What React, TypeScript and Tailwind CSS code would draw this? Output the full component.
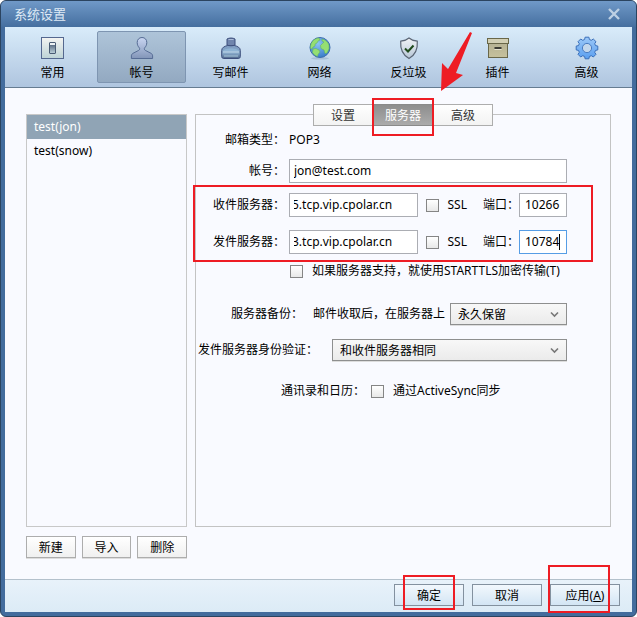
import { useState, type ReactNode } from "react";

const GeneralIcon = () => (
  <svg width="24" height="24" viewBox="0 0 24 24" aria-hidden="true">
    <defs>
      <linearGradient id="general" x1="0" y1="0" x2="0" y2="1">
        <stop offset="0" stopColor="#f4f4f2" />
        <stop offset="1" stopColor="#bdd3d6" />
      </linearGradient>
      <linearGradient id="switch" x1="0" y1="0" x2="0" y2="1">
        <stop offset="0" stopColor="#5d7086" />
        <stop offset="1" stopColor="#b9cdd6" />
      </linearGradient>
    </defs>
    <rect x="0.5" y="1.5" width="22" height="21" fill="url(#general)" stroke="#55688f" />
    <rect x="8.5" y="6.5" width="6" height="11" rx="0.5" fill="#eef3f5" stroke="#4a5c74" />
    <rect x="9" y="9" width="5" height="8" fill="url(#switch)" />
  </svg>
);

const AccountIcon = () => (
  <svg width="24" height="24" viewBox="0 0 24 24" aria-hidden="true">
    <defs>
      <linearGradient id="person" x1="0" y1="0" x2="0" y2="1">
        <stop offset="0" stopColor="#c9d6f2" />
        <stop offset="1" stopColor="#8295b8" />
      </linearGradient>
    </defs>
    <path
      d="M12 1.5c-3 0-4.8 2.2-4.8 5 0 2.4.9 4 2.1 5.3 .6 .7 .5 2-.6 2.6L3 17.3c-1.100.6-1.600 1.500-1.600 2.700v2.500h21.200V20c0-1.200-.5-2.100-1.600-2.700l-5.700-2.900c-1.100-.6-1.200-1.900-.6-2.600C15.900 10.500 16.800 8.900 16.800 6.500c0-2.800-1.800-5-4.800-5z"
      fill="url(#person)"
      stroke="#566c94"
    />
  </svg>
);

const ComposeIcon = () => (
  <svg width="24" height="24" viewBox="0 0 24 24" aria-hidden="true">
    <defs>
      <linearGradient id="ink" x1="0" y1="0" x2="0" y2="1">
        <stop offset="0" stopColor="#7f9cc2" />
        <stop offset="0.6" stopColor="#86a8c8" />
        <stop offset="1" stopColor="#4c6388" />
      </linearGradient>
    </defs>
    <path
      d="M8.500 9.500c-3 .8-5.800 2-5.800 5v6c0 1.200.8 2 2 2h14.600c1.200 0 2-.8 2-2v-6c0-3-2.800-4.200-5.800-5z"
      fill="url(#ink)"
      stroke="#3d4f7c"
    />
    <path d="M4 15.500c.5-2 3-3 8-3s7.500 1 8 3z" fill="#8fb4d4" />
    <path d="M4 16h16" stroke="#c4dcec" />
    <path d="M5 20h14" stroke="#a9c8da" />
    <path d="M8 3c2-1.300 6-1.300 8 0v6c-2 1-6 1-8 0z" fill="#7085ad" stroke="#3d4f7c" />
    <path d="M9.500 3.500h5" stroke="#aabbd8" />
  </svg>
);

const NetworkIcon = () => (
  <svg width="24" height="24" viewBox="0 0 24 24" aria-hidden="true">
    <defs>
      <radialGradient id="globe" cx="0.4" cy="0.3" r="0.8">
        <stop offset="0" stopColor="#8cc4f4" />
        <stop offset="1" stopColor="#2f74c4" />
      </radialGradient>
    </defs>
    <ellipse cx="12" cy="22.300" rx="9" ry="1.200" fill="#8ba6c4" opacity="0.5" />
    <circle cx="12" cy="11.500" r="10" fill="url(#globe)" stroke="#3d6dae" />
    <path d="M4 6c2-3 5-4 7-4l1 2-2 1-1 2-2 1 0 2-2 1-1 2-1.500-.5c-.3-2 .2-4.500 1.500-6.500z" fill="#95df72" stroke="#5cae5a" strokeWidth="0.5" />
    <path d="M5 13l3-.5 3 1.500 1 2-2 2.500-.5 2c-2-.8-4-2-5-4z" fill="#95df72" stroke="#5cae5a" strokeWidth="0.5" />
    <path d="M14 3c3 .5 6 3 7 6v4l-2 4-2 .5-1-3.500-3-1.500-.5-3 2-2 1.500-1.500-2-1z" fill="#95df72" stroke="#5cae5a" strokeWidth="0.5" />
  </svg>
);

const SpamIcon = () => (
  <svg width="24" height="24" viewBox="0 0 24 24" aria-hidden="true">
    <defs>
      <linearGradient id="shield" x1="0" y1="0" x2="0" y2="1">
        <stop offset="0" stopColor="#f2f4f6" />
        <stop offset="1" stopColor="#b6c6d6" />
      </linearGradient>
    </defs>
    <path
      d="M12 2c2 1.800 4.800 2.800 8.300 3.200 .5 6.800-1.300 13.300-8.300 17.300C5 18.500 3.200 12 3.700 5.200 7.200 4.800 10 3.800 12 2z"
      fill="url(#shield)"
      stroke="#5b6675"
      strokeWidth="1.200"
    />
    <path d="M8 12.500l3 3 5.500-6" fill="none" stroke="#1f4a1c" strokeWidth="2" />
  </svg>
);

const PluginIcon = () => (
  <svg width="24" height="24" viewBox="0 0 24 24" aria-hidden="true">
    <defs>
      <linearGradient id="box" x1="0" y1="0" x2="0" y2="1">
        <stop offset="0" stopColor="#b5b193" />
        <stop offset="1" stopColor="#c6c19c" />
      </linearGradient>
    </defs>
    <rect x="2.500" y="6.500" width="19" height="15" fill="url(#box)" stroke="#696749" />
    <rect x="1.500" y="2.500" width="21" height="5" fill="#d2cfb4" stroke="#696749" />
    <path d="M8.500 12h7" stroke="#3b3b34" strokeWidth="2" />
    <path d="M8.500 13.500h7" stroke="#e6e3cf" />
  </svg>
);

const AdvancedIcon = () => (
  <svg width="24" height="24" viewBox="0 0 24 24" aria-hidden="true">
    <defs>
      <linearGradient id="gear" x1="0" y1="0" x2="0" y2="1">
        <stop offset="0" stopColor="#9cc8f8" />
        <stop offset="1" stopColor="#5a9ff0" />
      </linearGradient>
    </defs>
    <path
      d="M9.600 3.500L10.100 1.200H13.900L14.400 3.500L16.300 4.300L18.300 3L21 5.700L19.700 7.700L20.500 9.600L22.800 10.100V13.900L20.500 14.400L19.700 16.300L21 18.300L18.300 21L16.300 19.700L14.400 20.500L13.900 22.800H10.100L9.600 20.500L7.700 19.700L5.700 21L3 18.300L4.300 16.300L3.500 14.400L1.200 13.900V10.100L3.500 9.600L4.300 7.700L3 5.700L5.700 3L7.700 4.300Z"
      fill="url(#gear)"
      stroke="#3a6fb8"
      strokeLinejoin="round"
    />
    <circle cx="12" cy="12" r="4.600" fill="#c3d7ec" stroke="#4a7cc0" />
  </svg>
);

const categories = [
  { label: "常用", icon: <GeneralIcon /> },
  { label: "帐号", icon: <AccountIcon /> },
  { label: "写邮件", icon: <ComposeIcon /> },
  { label: "网络", icon: <NetworkIcon /> },
  { label: "反垃圾", icon: <SpamIcon /> },
  { label: "插件", icon: <PluginIcon /> },
  { label: "高级", icon: <AdvancedIcon /> },
];

const accounts = ["test(jon)", "test(snow)"];
const tabs = ["设置", "服务器", "高级"];

const fieldClass = "h-6 border border-[#abadb3] bg-white px-1 pb-0.5 outline-none";

const Checkbox = ({ id }: { id: string }) => (
  <input
    id={id}
    type="checkbox"
    className="size-[13px] shrink-0 appearance-none border border-[#858585] bg-linear-to-b from-white to-[#e8e8e8] checked:bg-[#436c9d]"
  />
);

type DropdownProps = { id: string; value: string; className: string };

const Dropdown = ({ id, value, className }: DropdownProps) => (
  <div className={`relative ${className}`}>
    <select
      id={id}
      className="h-[22px] w-full appearance-none border border-[#8e8f8f] bg-linear-to-b from-[#f8f8f8] to-[#ebebeb] pt-0.5 pl-[7px] pr-6 shadow-[0_1px_0_#dddddd]"
    >
      <option>{value}</option>
    </select>
    <svg className="pointer-events-none absolute right-2 top-2" width="9" height="7" viewBox="0 0 9 7" aria-hidden="true">
      <path d="M1 1.500l3.500 3.500L8 1.500" fill="none" stroke="#777" strokeWidth="1.600" />
    </svg>
  </div>
);

type ServerRowProps = { id: string; label: string; host: string; port: string; active?: boolean };

const ServerRow = ({ id, label, host, port, active }: ServerRowProps) => (
  <div className="flex items-center">
    <label htmlFor={id} className="w-[93px] shrink-0 pr-1 text-right">
      {label}
    </label>
    <input id={id} defaultValue={host} className={`${fieldClass} min-w-0 flex-1 -indent-0.5`} />
    <div className="ml-2 flex items-center gap-[9px]">
      <Checkbox id={`${id}-ssl`} />
      <label htmlFor={`${id}-ssl`}>SSL</label>
    </div>
    <label htmlFor={`${id}-port`} className="ml-4 shrink-0">
      端口：
    </label>
    <div className="relative w-12 shrink-0">
      <input
        id={`${id}-port`}
        defaultValue={port}
        className={
          active
            ? "h-6 w-full border border-[#569de5] bg-white px-[5px] pb-0.5 outline-none"
            : "h-6 w-full border border-[#abadb3] bg-white px-[5px] pb-0.5 outline-none"
        }
      />
      {active && <span className="absolute right-[7px] top-1 h-4 w-px bg-black" />}
    </div>
  </div>
);

const SmallButton = ({ children }: { children: ReactNode }) => (
  <button className="h-[22px] flex-1 border border-[#adadad] bg-linear-to-b from-white to-[#f0f0f0] pt-0.5 shadow-[0_1px_0_#dddddd]">
    {children}
  </button>
);

const FooterButton = ({ children }: { children: ReactNode }) => (
  <button className="h-[22px] w-[70px] border border-[#83919f] bg-linear-to-b from-[#f2f8fd] to-[#d3e5f4] pt-0.5">
    {children}
  </button>
);

const App = () => {
  const [category, setCategory] = useState("帐号");
  const [account, setAccount] = useState("test(jon)");
  const [tab, setTab] = useState("服务器");

  return (
    <div className="flex min-h-screen flex-col overflow-hidden rounded-md border border-[#2b4460] bg-[#436c9d] px-1 pb-1 font-['Noto_Sans','Noto_Sans_CJK_SC',sans-serif] text-xs leading-[18px] text-black">
      <header className="-mx-1 flex h-[26px] items-center justify-between bg-linear-to-b from-[#7099c8] to-[#456f9f] pl-[13px] pr-4 text-[#dfeaf5]">
        <h1 className="text-[13px]">系统设置</h1>
        <button aria-label="关闭" className="text-[#bdd0e4]">
          <svg width="12" height="12" viewBox="0 0 12 12" aria-hidden="true">
            <path d="M1 1l10 10M11 1L1 11" stroke="currentColor" strokeWidth="2.400" />
          </svg>
        </button>
      </header>

      <nav className="relative grid grid-cols-7 border-b border-[#667c91] bg-linear-to-b from-[#d9ecfa] to-[#afc5df] pt-1 pr-px pb-1 pl-[3px]">
        {categories.map((item) => (
          <button
            key={item.label}
            onClick={() => setCategory(item.label)}
            className={
              item.label === category
                ? "flex h-[52px] flex-col items-center rounded-xs border border-[#7e95b1] bg-linear-to-b from-[#aec4d9] to-[#93a9c1] pt-1"
                : "flex h-[52px] flex-col items-center rounded-xs border border-transparent pt-1"
            }
          >
            {item.icon}
            <span className="mt-1">{item.label}</span>
          </button>
        ))}
        <svg className="pointer-events-none absolute left-[436px] top-[4px] z-10" width="32" height="60" viewBox="0 0 32 60" aria-hidden="true">
          <path d="M0 60L1 32l6 6L29 1l2 1L15 42l7 2z" fill="#ee1c24" />
        </svg>
      </nav>

      <main className="flex flex-1 gap-2 bg-[#f9faff] px-[21px] pt-[26px] pb-[21px]">
        <aside className="flex w-[161px] shrink-0 flex-col gap-[9px]">
          <ul className="flex-1 border border-[#c8c8c8]">
            {accounts.map((name) => (
              <li key={name}>
                <button
                  onClick={() => setAccount(name)}
                  className={
                    name === account
                      ? "h-6 w-full bg-[#90a4b5] px-[7px] text-left text-white"
                      : "h-6 w-full px-[7px] text-left"
                  }
                >
                  {name}
                </button>
              </li>
            ))}
          </ul>
          <div className="flex gap-1.5">
            <SmallButton>新建</SmallButton>
            <SmallButton>导入</SmallButton>
            <SmallButton>删除</SmallButton>
          </div>
        </aside>

        <section className="mb-[31px] min-w-0 flex-1 border border-[#c3c3c3]">
          <div className="-mt-[11px] flex justify-center">
            <div className="flex bg-linear-to-b from-white to-[#f2f2f2]">
              {tabs.map((name) => (
                <div key={name} className="relative">
                  <button
                    onClick={() => setTab(name)}
                    className={
                      name === tab
                        ? "h-[22px] w-15 border border-[#8a8a8a] bg-linear-to-b from-[#8e8e8e] to-[#ababab] pt-0.5 text-white"
                        : "h-[22px] w-15 border border-[#adadad] pt-0.5 text-[#333333]"
                    }
                  >
                    {name}
                  </button>
                  {name === "服务器" && (
                    <span className="pointer-events-none absolute -inset-x-px -top-1.5 -bottom-2.5 z-10 border-2 border-[#ee1c24]" />
                  )}
                </div>
              ))}
            </div>
          </div>

          <form className="pt-[5px] pr-[43px]">
            <div className="flex">
              <span className="w-[93px] shrink-0 pr-1 text-right">邮箱类型：</span>
              <span>POP3</span>
            </div>
            <div className="mt-2.5 flex items-center">
              <label htmlFor="account" className="w-[93px] shrink-0 pr-1 text-right">
                帐号：
              </label>
              <input id="account" defaultValue="jon@test.com" className={`${fieldClass} min-w-0 flex-1`} />
            </div>

            <div className="relative mt-2.5 flex flex-col gap-[13px]">
              <ServerRow id="incoming" label="收件服务器：" host="5.tcp.vip.cpolar.cn" port="10266" />
              <ServerRow id="outgoing" label="发件服务器：" host="3.tcp.vip.cpolar.cn" port="10784" active />
              <span className="pointer-events-none absolute -inset-y-2 -left-[3px] -right-[26px] border-2 border-[#ee1c24]" />
            </div>

            <div className="mt-2 flex items-center gap-[9px] pl-[94px]">
              <Checkbox id="starttls" />
              <label htmlFor="starttls" className="whitespace-nowrap">
                如果服务器支持，就使用STARTTLS加密传输(T)
              </label>
            </div>

            <div className="mt-[23px] flex items-center justify-end">
              <span className="mr-2.5 whitespace-nowrap">服务器备份：</span>
              <label htmlFor="backup" className="mr-[5px] whitespace-nowrap">
                邮件收取后，在服务器上
              </label>
              <Dropdown id="backup" value="永久保留" className="w-[117px] shrink-0" />
            </div>
            <div className="mt-3.5 flex items-center justify-end">
              <label htmlFor="auth" className="mr-3.5 whitespace-nowrap">
                发件服务器身份验证：
              </label>
              <Dropdown id="auth" value="和收件服务器相同" className="w-[235px] shrink-0" />
            </div>
            <div className="mt-[21px] flex items-center pl-[85px]">
              <span className="mr-1.5">通讯录和日历：</span>
              <Checkbox id="activesync" />
              <label htmlFor="activesync" className="ml-[9px]">
                通过ActiveSync同步
              </label>
            </div>
          </form>
        </section>
      </main>

      <footer className="flex justify-end gap-2 border-t border-[#b4c1cc] bg-linear-to-b from-[#e8f2fa] to-[#dcebf6] px-3 pt-1 pb-1.5">
        <div className="relative flex">
          <FooterButton>确定</FooterButton>
          <span className="pointer-events-none absolute left-[9px] right-[9px] -top-[9px] -bottom-1 border-2 border-[#ee1c24]" />
        </div>
        <FooterButton>取消</FooterButton>
        <div className="relative flex">
          <FooterButton>
            应用(<u>A</u>)
          </FooterButton>
          <span className="pointer-events-none absolute -left-0.5 right-2.5 -top-[19px] -bottom-[7px] border-2 border-[#ee1c24]" />
        </div>
      </footer>
    </div>
  );
};

export default App;
